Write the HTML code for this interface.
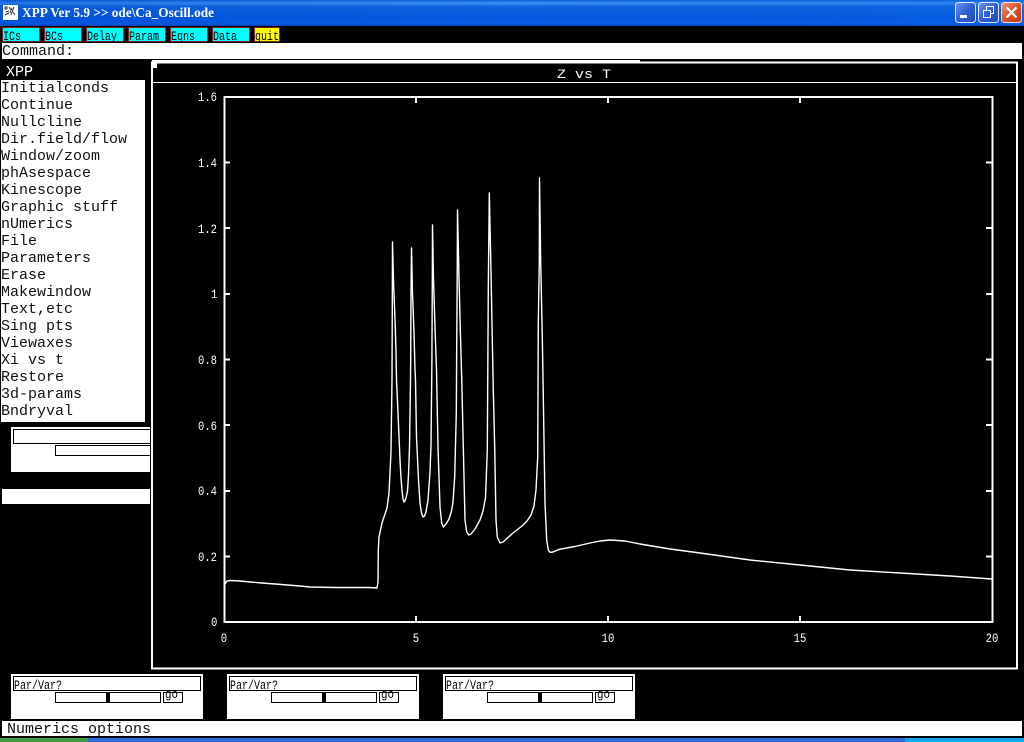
<!DOCTYPE html>
<html><head><meta charset="utf-8"><title>XPP Ver 5.9</title>
<style>
html,body{margin:0;padding:0;background:#000;width:1024px;height:742px;overflow:hidden}
svg{display:block}
.m{font-family:"Liberation Mono",monospace;font-size:15px;fill:#111}
.b{font-family:"Liberation Mono",monospace;font-size:13px;fill:#000}
.t{font-family:"Liberation Mono",monospace;font-size:13px;fill:#fff}
.p{font-family:"Liberation Mono",monospace;font-size:13px;fill:#000}
</style></head><body>
<svg width="1024" height="742" viewBox="0 0 1024 742" xmlns="http://www.w3.org/2000/svg">
<defs>
<linearGradient id="tb" x1="0" y1="0" x2="0" y2="1">
<stop offset="0" stop-color="#0a5fd8"/><stop offset=".12" stop-color="#3f92f5"/><stop offset=".25" stop-color="#0f64dc"/><stop offset=".7" stop-color="#0558e0"/><stop offset=".9" stop-color="#0a5de6"/><stop offset="1" stop-color="#0345b8"/>
</linearGradient>
<linearGradient id="tbh" x1="0" y1="0" x2="1" y2="0">
<stop offset="0" stop-color="#0047c8" stop-opacity=".35"/><stop offset=".5" stop-color="#0047c8" stop-opacity="0"/><stop offset="1" stop-color="#0a6cf0" stop-opacity=".3"/>
</linearGradient>
<linearGradient id="bb" x1="0" y1="0" x2="1" y2="1">
<stop offset="0" stop-color="#6f96ee"/><stop offset=".5" stop-color="#2e5fd8"/><stop offset="1" stop-color="#2148b8"/>
</linearGradient>
<linearGradient id="rb" x1="0" y1="0" x2="1" y2="1">
<stop offset="0" stop-color="#ec9a7c"/><stop offset=".5" stop-color="#d9542c"/><stop offset="1" stop-color="#b93a18"/>
</linearGradient>
</defs>
<rect width="1024" height="742" fill="#000"/>

<!-- title bar -->
<rect x="0" y="0" width="1024" height="26" fill="url(#tb)"/>
<rect x="0" y="0" width="1024" height="26" fill="url(#tbh)"/>
<rect x="3" y="5" width="15" height="15" fill="#fff"/>
<path d="M5 7h2v2H5zM9 7l2 3M12 8l-2 5M14 7l-3 8M6 12l3-1M5 15l4-2M13 12l2 3" stroke="#333" stroke-width="1" fill="none"/>
<text x="22" y="17" font-family="'Liberation Serif',serif" font-weight="bold" font-size="13.500" fill="#fff" textLength="192" lengthAdjust="spacingAndGlyphs">XPP Ver 5.9 &gt;&gt; ode\Ca_Oscill.ode</text>

<!-- window buttons -->
<rect x="955.500" y="2.500" width="20" height="20" rx="3" fill="url(#bb)" stroke="#dfe8fb"/>
<rect x="960" y="15" width="7" height="3" fill="#fff"/>
<rect x="978.500" y="2.500" width="20" height="20" rx="3" fill="url(#bb)" stroke="#dfe8fb"/>
<path d="M986.500 10v-3.500h7v7h-3M983.500 10.500h7v7h-7z" fill="none" stroke="#fff" stroke-width="1"/>
<rect x="1001.500" y="2.500" width="20" height="20" rx="3" fill="url(#rb)" stroke="#f3dcd4"/>
<path d="M1006.500 7.500l10 10M1016.500 7.500l-10 10" stroke="#fff" stroke-width="2.200" fill="none"/>

<!-- button row -->
<g stroke="#7a2020" stroke-width="1" fill="#00ffff">
<rect x="2.500" y="27.500" width="37" height="14"/>
<rect x="44.500" y="27.500" width="37" height="14"/>
<rect x="86.500" y="27.500" width="37" height="14"/>
<rect x="128.500" y="27.500" width="37" height="14"/>
<rect x="170.500" y="27.500" width="37" height="14"/>
<rect x="212.500" y="27.500" width="37" height="14"/>
<rect x="254.500" y="27.500" width="25" height="14" fill="#ffff00"/>
</g>
<g>
<text class="b" x="3" y="40" textLength="18" lengthAdjust="spacingAndGlyphs">ICs</text>
<text class="b" x="45" y="40" textLength="18" lengthAdjust="spacingAndGlyphs">BCs</text>
<text class="b" x="87" y="40" textLength="30" lengthAdjust="spacingAndGlyphs">Delay</text>
<text class="b" x="129" y="40" textLength="30" lengthAdjust="spacingAndGlyphs">Param</text>
<text class="b" x="171" y="40" textLength="24" lengthAdjust="spacingAndGlyphs">Eqns</text>
<text class="b" x="213" y="40" textLength="24" lengthAdjust="spacingAndGlyphs">Data</text>
<text class="b" x="255" y="40" textLength="24" lengthAdjust="spacingAndGlyphs">quit</text>
</g>

<!-- command -->
<rect x="2" y="43" width="1020" height="16" fill="#fff"/>
<text class="m" x="2" y="55">Command:</text>

<!-- left menu -->
<text class="m" x="6" y="76" style="fill:#fff">XPP</text>
<rect x="1" y="80" width="144" height="342" fill="#fff"/>
<g>
<text class="m" x="1" y="92">Initialconds</text>
<text class="m" x="1" y="109">Continue</text>
<text class="m" x="1" y="126">Nullcline</text>
<text class="m" x="1" y="143">Dir.field/flow</text>
<text class="m" x="1" y="160">Window/zoom</text>
<text class="m" x="1" y="177">phAsespace</text>
<text class="m" x="1" y="194">Kinescope</text>
<text class="m" x="1" y="211">Graphic stuff</text>
<text class="m" x="1" y="228">nUmerics</text>
<text class="m" x="1" y="245">File</text>
<text class="m" x="1" y="262">Parameters</text>
<text class="m" x="1" y="279">Erase</text>
<text class="m" x="1" y="296">Makewindow</text>
<text class="m" x="1" y="313">Text,etc</text>
<text class="m" x="1" y="330">Sing pts</text>
<text class="m" x="1" y="347">Viewaxes</text>
<text class="m" x="1" y="364">Xi vs t</text>
<text class="m" x="1" y="381">Restore</text>
<text class="m" x="1" y="398">3d-params</text>
<text class="m" x="1" y="415">Bndryval</text>
</g>

<!-- left panels clipped by plot window -->
<rect x="11" y="427" width="139" height="45" fill="#fff"/>
<path d="M150 429.500H13.500V443.500H150M150 445.500H55.500V455.500H150" fill="none" stroke="#000"/>
<rect x="2" y="489" width="148" height="15" fill="#fff"/>

<!-- plot window -->
<g shape-rendering="crispEdges">
<rect x="152" y="62.500" width="865" height="606" fill="#000" stroke="#fff" stroke-width="2"/>
<rect x="152" y="60" width="488" height="3" fill="#fff"/>
<rect x="152" y="63" width="5" height="5" fill="#fff"/>
<rect x="152" y="82" width="865" height="1" fill="#fff"/>
</g>
<text class="t" x="557" y="78" textLength="54" lengthAdjust="spacingAndGlyphs">Z vs T</text>

<!-- axes -->
<g shape-rendering="crispEdges">
<rect x="224.500" y="97" width="768" height="525" fill="none" stroke="#fff" stroke-width="2"/>
<path d="M224 162.600h6M224 228.200h6M224 293.900h6M224 359.500h6M224 425.100h6M224 490.800h6M224 556.400h6M992 162.600h-6M992 228.200h-6M992 293.900h-6M992 359.500h-6M992 425.100h-6M992 490.800h-6M992 556.400h-6M416 622v-6M608 622v-6M800 622v-6M416 97v6M608 97v6M800 97v6" stroke="#fff" stroke-width="2" fill="none"/>
</g>
<g>
<text class="t" x="198" y="101" textLength="19" lengthAdjust="spacingAndGlyphs">1.6</text>
<text class="t" x="198" y="167" textLength="19" lengthAdjust="spacingAndGlyphs">1.4</text>
<text class="t" x="198" y="233" textLength="19" lengthAdjust="spacingAndGlyphs">1.2</text>
<text class="t" x="211" y="298" textLength="6.400" lengthAdjust="spacingAndGlyphs">1</text>
<text class="t" x="198" y="364" textLength="19" lengthAdjust="spacingAndGlyphs">0.8</text>
<text class="t" x="198" y="430" textLength="19" lengthAdjust="spacingAndGlyphs">0.6</text>
<text class="t" x="198" y="495" textLength="19" lengthAdjust="spacingAndGlyphs">0.4</text>
<text class="t" x="198" y="561" textLength="19" lengthAdjust="spacingAndGlyphs">0.2</text>
<text class="t" x="211" y="626" textLength="6.400" lengthAdjust="spacingAndGlyphs">0</text>
<text class="t" x="220.800" y="642" textLength="6.400" lengthAdjust="spacingAndGlyphs">0</text>
<text class="t" x="412.800" y="642" textLength="6.400" lengthAdjust="spacingAndGlyphs">5</text>
<text class="t" x="601.600" y="642" textLength="12.800" lengthAdjust="spacingAndGlyphs">10</text>
<text class="t" x="793.600" y="642" textLength="12.800" lengthAdjust="spacingAndGlyphs">15</text>
<text class="t" x="985.600" y="642" textLength="12.800" lengthAdjust="spacingAndGlyphs">20</text>
</g>

<!-- curve -->
<polyline fill="none" stroke="#fff" stroke-width="1.400" stroke-linejoin="round" points="225,584 227,581 230,580.500 240,581 250,582 262,583 275,584 300,586 310,587 335,587.500 368,587.500 377,588 378,582 378.300,550 379,537 382,523 384,517 387,508 389,493 391,452 392,380 392.500,242 393.500,281 395,319 396,352 396.500,380 398,413 400,460 401,478 402,490 403,499 404,502 405,501 406,498 407.500,491 408.500,475 409.500,447 410.500,380 410.700,356 411,293 411.500,248 412.500,293 414,333 415,370 415.500,380 416.500,437 418.500,480 420,503 421.500,513 423,517 424.500,516 426,512 428,500 430,472 431,445 431.700,380 431.900,362 432.300,280 432.500,225 433.500,280 435,327 436.500,370 436.700,380 438,447 440,507 441.700,523 443.300,527 446,524 449,519 451.500,511 453,502 454.700,477 456.300,413 456.700,347 457.200,278 457.500,210 459,278 460.300,330 461.700,378 463.300,447 465,520 466.700,532 468.700,535 471,534 475,529 480,520 483,511 485.500,498 487.300,450 488.300,288 489.300,193 491,272 492.300,340 493.300,390 494.700,447 496,520 497.300,537 500,543 503,542 513,533 522,526 527,521 531,515 534,506 536,490 537.700,457 538.300,322 539.300,262 539.500,178 540.700,262 542.300,337 543.300,397 545,503 546.700,540 548.300,550 550,552.300 553,552 559.300,549.300 575,546.500 590,543 600,541 610,540 625,541 640,544 670,549 700,553 750,560 800,565 850,570 900,573 950,576 992,579"/>

<!-- bottom slider panels -->
<g shape-rendering="crispEdges">
<rect x="11" y="674" width="192" height="45" fill="#fff"/>
<rect x="13.500" y="676.500" width="187" height="14" fill="#fff" stroke="#000"/>
<rect x="55.500" y="692.500" width="105" height="10" fill="#fff" stroke="#000"/>
<rect x="106" y="692" width="4" height="11" fill="#000"/>
<rect x="163.500" y="692.500" width="19" height="10" fill="#fff" stroke="#000"/>
<rect x="227" y="674" width="192" height="45" fill="#fff"/>
<rect x="229.500" y="676.500" width="187" height="14" fill="#fff" stroke="#000"/>
<rect x="271.500" y="692.500" width="105" height="10" fill="#fff" stroke="#000"/>
<rect x="322" y="692" width="4" height="11" fill="#000"/>
<rect x="379.500" y="692.500" width="19" height="10" fill="#fff" stroke="#000"/>
<rect x="443" y="674" width="192" height="45" fill="#fff"/>
<rect x="445.500" y="676.500" width="187" height="14" fill="#fff" stroke="#000"/>
<rect x="487.500" y="692.500" width="105" height="10" fill="#fff" stroke="#000"/>
<rect x="538" y="692" width="4" height="11" fill="#000"/>
<rect x="595.500" y="692.500" width="19" height="10" fill="#fff" stroke="#000"/>
</g>
<text class="p" x="14" y="689" textLength="48" lengthAdjust="spacingAndGlyphs">Par/Var?</text>
<text class="p" x="165" y="698" textLength="13" lengthAdjust="spacingAndGlyphs">go</text>
<text class="p" x="230" y="689" textLength="48" lengthAdjust="spacingAndGlyphs">Par/Var?</text>
<text class="p" x="381" y="698" textLength="13" lengthAdjust="spacingAndGlyphs">go</text>
<text class="p" x="446" y="689" textLength="48" lengthAdjust="spacingAndGlyphs">Par/Var?</text>
<text class="p" x="597" y="698" textLength="13" lengthAdjust="spacingAndGlyphs">go</text>

<!-- status -->
<rect x="2" y="721" width="1020" height="15" fill="#fff"/>
<text class="m" x="7" y="733">Numerics options</text>

<!-- taskbar -->
<rect x="0" y="738" width="1024" height="4" fill="#2f6fdc"/>
<rect x="0" y="738" width="88" height="4" fill="#3f9a45"/>
<rect x="905" y="738" width="119" height="4" fill="#12a5ec"/>
</svg>
</body></html>
